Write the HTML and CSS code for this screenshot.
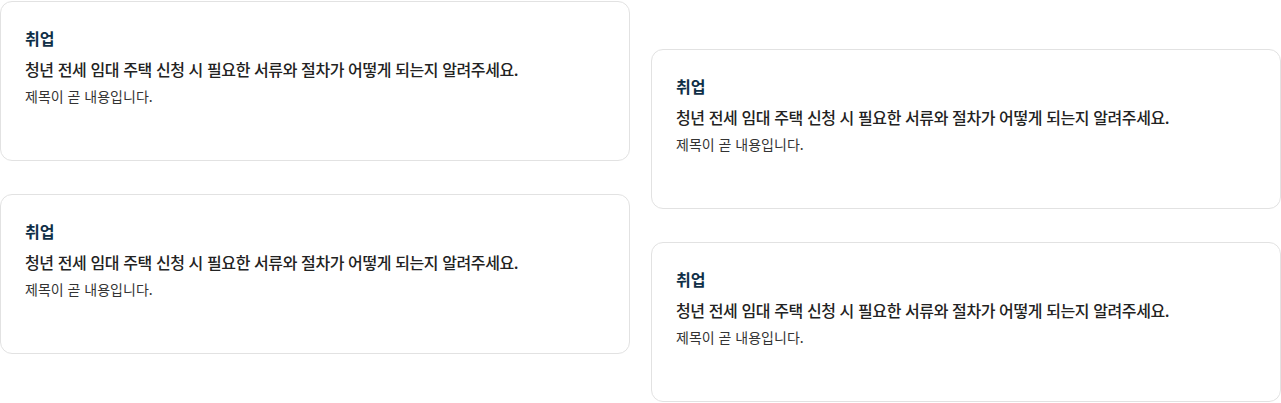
FILE: index.html
```html
<!DOCTYPE html>
<html lang="ko">
<head>
    <meta charset="UTF-8">
    <title>질문 목록</title>
    <link rel="stylesheet" href="styles.css">
</head>
<body>
    <div class="board">
        <div class="column">
            <div class="card">
                <h3 class="card-tag">취업</h3>
                <p class="card-title">청년 전세 임대 주택 신청 시 필요한 서류와 절차가 어떻게 되는지 알려주세요.</p>
                <p class="card-body">제목이 곧 내용입니다.</p>
            </div>
            <div class="card">
                <h3 class="card-tag">취업</h3>
                <p class="card-title">청년 전세 임대 주택 신청 시 필요한 서류와 절차가 어떻게 되는지 알려주세요.</p>
                <p class="card-body">제목이 곧 내용입니다.</p>
            </div>
        </div>
        <div class="column column-offset">
            <div class="card">
                <h3 class="card-tag">취업</h3>
                <p class="card-title">청년 전세 임대 주택 신청 시 필요한 서류와 절차가 어떻게 되는지 알려주세요.</p>
                <p class="card-body">제목이 곧 내용입니다.</p>
            </div>
            <div class="card">
                <h3 class="card-tag">취업</h3>
                <p class="card-title">청년 전세 임대 주택 신청 시 필요한 서류와 절차가 어떻게 되는지 알려주세요.</p>
                <p class="card-body">제목이 곧 내용입니다.</p>
            </div>
        </div>
    </div>
</body>
</html>
```

FILE: styles.css
```css
body {
    margin: 0;
    background-color: #ffffff;
    font-family: "Noto Sans CJK KR", "Noto Sans", sans-serif;
    color: #1f1f1f;
}

.board {
    display: grid;
    grid-template-columns: 630px 630px;
    column-gap: 21px;
    align-items: start;
    padding-top: 1px;
}

.column {
    display: flex;
    flex-direction: column;
    gap: 33px;
}

.column-offset {
    padding-top: 48px;
}

.card {
    box-sizing: border-box;
    height: 160px;
    padding: 24px 24px;
    border: 1px solid #e2e2e2;
    border-radius: 12px;
    background-color: #ffffff;
}

.card-tag {
    margin: 0 0 7px;
    font-size: 16px;
    font-weight: 700;
    line-height: 24px;
    color: #0f2f47;
}

.card-title {
    margin: 0 0 5px;
    font-size: 16px;
    font-weight: 500;
    line-height: 24px;
    letter-spacing: -0.4px;
    color: #222222;
}

.card-body {
    margin: 0;
    font-size: 14px;
    line-height: 20px;
    color: #333333;
}
```
